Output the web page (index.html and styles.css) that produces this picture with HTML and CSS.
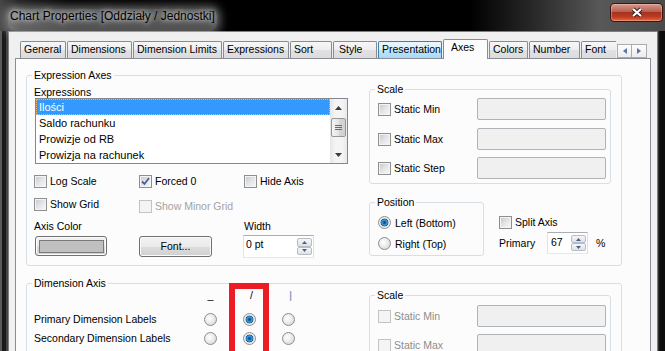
FILE: index.html
```html
<!DOCTYPE html>
<html lang="pl">
<head>
  <meta charset="UTF-8" />
  <meta name="viewport" content="width=device-width, initial-scale=1.0"/>
  <title>Chart Properties</title>
  <link rel="stylesheet" href="styles.css">
</head>
<body>
  <div class="window">
    <div class="titlebar">
      <span class="title">Chart Properties [Oddziały / Jednostki]</span>
      <span class="close-btn">
        <svg width="14" height="11" viewBox="0 0 14 11">
          <path d="M3 2 L11 9 M11 2 L3 9" stroke="#3c1c1c" stroke-width="4.2" fill="none"/>
          <path d="M3 2 L11 9 M11 2 L3 9" stroke="#ffffff" stroke-width="2.2" fill="none"/>
        </svg>
      </span>
    </div>

    <div class="client">
      <div class="tabstrip">
        <div class="tabs">
          <span class="tab tab-general">General</span>
          <span class="tab tab-dimensions">Dimensions</span>
          <span class="tab tab-limits">Dimension Limits</span>
          <span class="tab tab-expressions">Expressions</span>
          <span class="tab tab-sort">Sort</span>
          <span class="tab tab-style">Style</span>
          <span class="tab tab-presentation hover">Presentation</span>
          <span class="tab tab-axes active">Axes</span>
          <span class="tab tab-colors">Colors</span>
          <span class="tab tab-number">Number</span>
          <span class="tab tab-font">Font</span>
        </div>
        <div class="tab-scroll">
          <span class="tab-arrow"><svg width="4" height="6" viewBox="0 0 4 6"><path d="M4 0 L0 3 L4 6Z" fill="#5b74a4"/></svg></span>
          <span class="tab-arrow"><svg width="4" height="6" viewBox="0 0 4 6"><path d="M0 0 L4 3 L0 6Z" fill="#5b74a4"/></svg></span>
        </div>
      </div>

      <div class="panel">
        <div class="group axes-group">
          <span class="group-title">Expression Axes</span>
          <div class="axes-body">
            <div class="expr-col">
              <div class="field-label">Expressions</div>
              <div class="listbox">
                <div class="list-items">
                  <div class="list-item selected">Ilości</div>
                  <div class="list-item">Saldo rachunku</div>
                  <div class="list-item">Prowizje od RB</div>
                  <div class="list-item">Prowizja na rachunek</div>
                </div>
                <div class="vscroll">
                  <span class="vs-arrow"><svg width="7" height="4" viewBox="0 0 7 4"><path d="M0 4 L3.5 0 L7 4Z" fill="#3c3c3c"/></svg></span>
                  <div class="vs-track">
                    <span class="vs-thumb">
                      <svg width="7" height="6" viewBox="0 0 7 6"><path d="M0 0.5 H7 M0 2.5 H7 M0 4.5 H7" stroke="#6a6a6a" stroke-width="1"/></svg>
                    </span>
                  </div>
                  <span class="vs-arrow"><svg width="7" height="4" viewBox="0 0 7 4"><path d="M0 0 L3.5 4 L7 0Z" fill="#3c3c3c"/></svg></span>
                </div>
              </div>

              <div class="check-row row1">
                <label class="check"><span class="cb"></span>Log Scale</label>
                <label class="check">
                  <span class="cb checked"><svg width="11" height="11" viewBox="0 0 11 11"><path d="M2 5.5 L4.5 8 L9 2" fill="none" stroke="#4b5f92" stroke-width="1.8"/></svg></span>Forced 0
                </label>
                <label class="check"><span class="cb"></span>Hide Axis</label>
              </div>
              <div class="check-row row2">
                <label class="check"><span class="cb"></span>Show Grid</label>
                <label class="check minor disabled"><span class="cb"></span>Show Minor Grid</label>
              </div>

              <div class="label-row">
                <span class="axis-color-label">Axis Color</span>
                <span>Width</span>
              </div>
              <div class="control-row">
                <span class="btn color-btn"><span class="swatch"></span></span>
                <span class="btn font-btn">Font...</span>
                <span class="spin width-spin">
                  <span class="spin-val">0 pt</span>
                  <span class="spin-btns">
                    <span class="spin-btn"><svg width="5" height="3" viewBox="0 0 5 3"><path d="M0 3 L2.5 0 L5 3Z" fill="#4d6185"/></svg></span>
                    <span class="spin-btn"><svg width="5" height="3" viewBox="0 0 5 3"><path d="M0 0 L2.5 3 L5 0Z" fill="#4d6185"/></svg></span>
                  </span>
                </span>
              </div>
            </div>

            <div class="side-col">
              <div class="group scale-group">
                <span class="group-title">Scale</span>
                <div class="scale-row first">
                  <label class="check"><span class="cb"></span>Static Min</label>
                  <span class="textbox"></span>
                </div>
                <div class="scale-row">
                  <label class="check"><span class="cb"></span>Static Max</label>
                  <span class="textbox"></span>
                </div>
                <div class="scale-row third">
                  <label class="check"><span class="cb"></span>Static Step</label>
                  <span class="textbox"></span>
                </div>
              </div>

              <div class="pos-row">
                <div class="group pos-group">
                  <span class="group-title">Position</span>
                  <div class="radio-row"><span class="rb on"></span>Left (Bottom)</div>
                  <div class="radio-row"><span class="rb"></span>Right (Top)</div>
                </div>
                <div class="split-col">
                  <label class="check"><span class="cb"></span>Split Axis</label>
                  <div class="primary-row">
                    <span class="primary-label">Primary</span>
                    <span class="spin primary-spin">
                      <span class="spin-val">67</span>
                      <span class="spin-btns">
                        <span class="spin-btn"><svg width="5" height="3" viewBox="0 0 5 3"><path d="M0 3 L2.5 0 L5 3Z" fill="#4d6185"/></svg></span>
                        <span class="spin-btn"><svg width="5" height="3" viewBox="0 0 5 3"><path d="M0 0 L2.5 3 L5 0Z" fill="#4d6185"/></svg></span>
                      </span>
                    </span>
                    <span class="pct">%</span>
                  </div>
                </div>
              </div>
            </div>
          </div>
        </div>

        <div class="group dim-group">
          <span class="group-title">Dimension Axis</span>
          <div class="dim-body">
            <div class="dim-col">
              <div class="dim-head">
                <span class="dim-label"></span>
                <span class="cells">
                  <span class="cell">_</span>
                  <span class="cell slash">/</span>
                  <span class="cell vbar">|</span>
                </span>
              </div>
              <div class="dim-row first">
                <span class="dim-label">Primary Dimension Labels</span>
                <span class="cells"><span class="rb"></span><span class="rb on"></span><span class="rb"></span></span>
              </div>
              <div class="dim-row">
                <span class="dim-label">Secondary Dimension Labels</span>
                <span class="cells"><span class="rb"></span><span class="rb on"></span><span class="rb"></span></span>
              </div>
            </div>

            <div class="group scale-group dim-scale">
              <span class="group-title">Scale</span>
              <div class="scale-row first">
                <label class="check disabled"><span class="cb"></span>Static Min</label>
                <span class="textbox"></span>
              </div>
              <div class="scale-row">
                <label class="check disabled"><span class="cb"></span>Static Max</label>
                <span class="textbox"></span>
              </div>
            </div>
          </div>
        </div>
      </div>
    </div>

    <div class="annotation"></div>
  </div>
</body>
</html>
```

FILE: styles.css
```css
body {
  margin: 0;
  background: #111;
  font-family: "Liberation Sans", Arial, sans-serif;
  font-size: 10.5px;
  color: #000;
}

.window {
  position: relative;
  width: 665px;
  height: 351px;
  overflow: hidden;
  background: linear-gradient(90deg, #5a5a5a 0, #5a5a5a 2px, #1a1a1a 2px, #1a1a1a 6px, #444 6px, #444 8px, #151515 8px, #151515 658px, #3a3a3a 658px, #0c0c0c 660px);
}

/* title bar */

.titlebar {
  display: flex;
  height: 31px;
  background: linear-gradient(90deg, #474747 0, #1c1c1c 20px, #000 70px, #000 470px, #262626 530px, #585858 600px, #4a4a4a 665px);
}

.title {
  margin: 9px 0 0 8px;
  padding: 0 2px;
  font-size: 12px;
  line-height: 14px;
  color: #000;
  border-radius: 7px;
  background: rgba(235, 235, 235, 0.35);
  box-shadow: 0 0 8px 4px rgba(235, 235, 235, 0.35);
  text-shadow: 0 0 5px rgba(255, 255, 255, 0.9), 0 0 9px rgba(255, 255, 255, 0.7);
}

.close-btn {
  display: flex;
  align-items: center;
  justify-content: center;
  margin: 3px 2px 0 auto;
  width: 53px;
  height: 19px;
  box-sizing: border-box;
  border: 1px solid #3a1612;
  border-radius: 4px;
  background: linear-gradient(#d49a8e 0, #b95f50 45%, #a33420 50%, #c03a20 75%, #e26a44 100%);
  box-shadow: inset 0 0 0 1px rgba(255, 220, 200, 0.35);
}

/* client area */

.client {
  box-sizing: border-box;
  width: 650px;
  height: 320px;
  margin-left: 8px;
  padding: 7px 6px 0 6px;
  border: 1px solid #7f7f7f;
  border-bottom: none;
  background: #f0f0f0;
}

.tabstrip {
  position: relative;
  z-index: 1;
  display: flex;
  height: 20px;
  margin-bottom: -1px;
  padding-left: 5px;
}

.tabs {
  display: flex;
  align-items: flex-end;
  gap: 1px;
  width: 596px;
  overflow: hidden;
  flex: none;
}

.tab {
  flex: none;
  box-sizing: border-box;
  height: 17px;
  margin-bottom: 1px;
  padding-left: 3px;
  border: 1px solid #898c95;
  border-bottom: none;
  border-radius: 2px 2px 0 0;
  background: linear-gradient(#f7f7f7, #ededed 50%, #e1e1e1 51%, #dcdcdc);
  line-height: 15px;
  white-space: nowrap;
}

.tab.hover {
  border-color: #3c7fb1;
  background: linear-gradient(#eaf6fd, #d9f0fc 50%, #bee6fd 51%, #a7d9f5);
}

.tab.active {
  height: 20px;
  margin-bottom: 0;
  padding-left: 7px;
  background: #fcfcfc;
  line-height: 15px;
}

.tab-general { width: 46px; }
.tab-dimensions { width: 65px; }
.tab-limits { width: 89px; }
.tab-expressions { width: 66px; }
.tab-sort { width: 42px; }
.tab-style { width: 44px; padding-left: 5px; }
.tab-presentation { width: 64px; }
.tab-axes { width: 45px; }
.tab-colors { width: 39px; }
.tab-number { width: 51px; }
.tab-font { width: 40px; }

.tab-scroll {
  display: flex;
  align-self: flex-end;
  margin: 0 0 1px 1px;
}

.tab-arrow {
  display: flex;
  align-items: center;
  justify-content: center;
  width: 15px;
  height: 14px;
  box-sizing: border-box;
  border: 1px solid #acacac;
  background: linear-gradient(#fdfdfd, #ececec);
}

.tab-arrow + .tab-arrow {
  border-left: none;
}

.panel {
  box-sizing: border-box;
  height: 294px;
  padding: 16px 28px 0 10px;
  border: 1px solid #898c95;
  border-bottom: none;
  background: #fcfcfc;
  overflow: hidden;
}

/* group boxes */

.group {
  border: 1px solid #d5dfe5;
  border-radius: 3px;
}

.group-title {
  display: block;
  width: fit-content;
  margin: -7px 0 0 5px;
  padding: 0 2px;
  line-height: 12px;
  background: #fcfcfc;
}

.axes-body {
  display: flex;
  align-items: flex-start;
  gap: 21px;
  padding: 0 9px 7px 7px;
}

.expr-col {
  width: 314px;
  flex: none;
}

.field-label {
  margin-top: 5px;
  line-height: 12px;
}

.listbox {
  display: flex;
  box-sizing: border-box;
  width: 313px;
  height: 66px;
  margin-left: 1px;
  border: 1px solid #828790;
  background: #fff;
}

.list-items {
  flex: 1;
}

.list-item {
  height: 16px;
  padding-left: 3px;
  line-height: 16px;
  font-size: 11px;
}

.list-item.selected {
  box-sizing: border-box;
  padding-left: 2px;
  border: 1px dotted #f2b56e;
  background: #3399ff;
  color: #fff;
  line-height: 14px;
}

.vscroll {
  display: flex;
  flex-direction: column;
  width: 17px;
  background: linear-gradient(90deg, #e6e6e6, #f4f4f4 30%, #f4f4f4 70%, #e9e9e9);
}

.vs-arrow {
  display: flex;
  align-items: center;
  justify-content: center;
  height: 17px;
}

.vs-track {
  flex: 1;
  padding: 2px 1px 0 1px;
}

.vs-thumb {
  display: flex;
  align-items: center;
  justify-content: center;
  box-sizing: border-box;
  height: 19px;
  border: 1px solid #979797;
  border-radius: 2px;
  background: linear-gradient(90deg, #f3f3f3, #e4e4e4 50%, #d6d6d6 51%, #d0d0d0);
}

/* checkboxes and radios */

.check {
  display: flex;
  align-items: center;
  gap: 3px;
  flex: none;
  width: 105px;
  height: 13px;
  line-height: 13px;
  white-space: nowrap;
}

.cb {
  display: flex;
  flex: none;
  box-sizing: border-box;
  width: 13px;
  height: 13px;
  border: 1px solid #8e8f8f;
  background: linear-gradient(135deg, #c2c6cc 0, #e3e5e8 50%, #f8f8f8 100%);
  box-shadow: inset 0 0 0 1px #f4f4f4;
}

.check.disabled {
  color: #8d8d8d;
}

.check.disabled .cb {
  border-color: #c3c3c3;
  background: #f4f4f4;
  box-shadow: none;
}

.check.minor {
  margin-top: 2px;
  color: #a3a3a3;
}

.rb {
  display: block;
  flex: none;
  box-sizing: border-box;
  width: 13px;
  height: 13px;
  border: 1px solid #8d8d8d;
  border-radius: 50%;
  background: radial-gradient(circle at 40% 40%, #ffffff 0, #eeeeee 40%, #cfcfcf 100%);
}

.rb.on {
  background: radial-gradient(circle at 50% 50%, #0b3f6b 0, #1d6fb3 1.5px, #3aa7ea 2.6px, #1a5f9a 3.6px, #dedede 4.2px, #f6f6f6 5.5px);
}

.check-row {
  display: flex;
  align-items: flex-start;
}

.check-row.row1 { margin-top: 11px; }
.check-row.row2 { margin-top: 10px; }

.label-row {
  display: flex;
  margin-top: 7px;
  line-height: 12px;
}

.axis-color-label {
  width: 210px;
}

.control-row {
  display: flex;
  align-items: flex-start;
  margin-top: 3px;
}

.btn {
  box-sizing: border-box;
  border: 1px solid #707070;
  border-radius: 3px;
  background: linear-gradient(#f2f2f2, #ebebeb 50%, #dddddd 51%, #cfcfcf);
  box-shadow: inset 0 0 0 1px #fbfbfb;
}

.color-btn {
  display: flex;
  width: 72px;
  height: 20px;
  margin: 1px 0 0 1px;
  padding: 3px 2px 2px 3px;
}

.swatch {
  flex: 1;
  border: 1px solid #7a7a7a;
  background: #c0c0c0;
}

.font-btn {
  width: 73px;
  height: 21px;
  margin: 1px 0 0 32px;
  line-height: 19px;
  text-align: center;
}

.spin {
  display: flex;
  flex: none;
  box-sizing: border-box;
  border: 1px solid;
  border-color: #abadb3 #dbdfe6 #e3e9ef #e2e3ea;
  background: #fff;
}

.spin-val {
  flex: 1;
  padding: 2px 0 0 2px;
  line-height: 12px;
}

.spin-btns {
  display: flex;
  flex-direction: column;
  width: 15px;
  margin: 2px 1px 2px 0;
}

.spin-btn {
  display: flex;
  flex: 1;
  align-items: center;
  justify-content: center;
  border: 1px solid #b7bdc6;
  border-radius: 2px;
  background: linear-gradient(#f6f6f6, #dde2e8);
}

.width-spin {
  width: 71px;
  height: 23px;
  margin-left: 31px;
}

/* right side of expression axes */

.side-col {
  width: 242px;
  flex: none;
}

.scale-group {
  margin-top: 8px;
  padding-bottom: 4px;
}

.scale-row {
  display: flex;
  align-items: center;
  height: 22px;
  margin-top: 8px;
  padding: 0 4px 0 8px;
}

.scale-row .check {
  width: auto;
}

.scale-row.first { margin-top: 3px; }
.scale-row.third { margin-top: 7px; }

.textbox {
  flex: none;
  box-sizing: border-box;
  width: 129px;
  height: 22px;
  margin-left: auto;
  border: 1px solid #afb3b7;
  border-radius: 2px;
  background: #f0f0f0;
}

.pos-row {
  display: flex;
  align-items: flex-start;
  margin-top: 18px;
}

.pos-group {
  flex: none;
  box-sizing: border-box;
  width: 115px;
  padding-bottom: 5px;
}

.radio-row {
  display: flex;
  align-items: center;
  gap: 4px;
  height: 13px;
  margin-top: 8px;
  padding-left: 8px;
  white-space: nowrap;
}

.split-col {
  margin-left: 15px;
  padding-top: 14px;
}

.primary-row {
  display: flex;
  align-items: center;
  height: 22px;
  margin-top: 3px;
}

.primary-label {
  width: 48px;
  flex: none;
}

.primary-spin {
  width: 41px;
  height: 22px;
}

.primary-spin .spin-val {
  padding: 3px 0 0 3px;
}

.pct {
  margin-left: 8px;
}

/* dimension axis */

.dim-group {
  margin-top: 17px;
  height: 80px;
}

.dim-body {
  display: flex;
  align-items: flex-start;
  gap: 21px;
  padding-left: 7px;
}

.dim-col {
  width: 314px;
  flex: none;
}

.dim-head {
  display: flex;
  height: 12px;
  line-height: 12px;
}

.dim-label {
  width: 170px;
  flex: none;
  white-space: nowrap;
}

.cells {
  display: flex;
  gap: 26px;
}

.cell {
  width: 13px;
  text-align: center;
}

.cell.slash {
  padding-left: 2px;
}

.cell.vbar {
  color: #5b7bb0;
}

.dim-row {
  display: flex;
  align-items: center;
  height: 16px;
  margin-top: 3px;
}

.dim-row.first {
  margin-top: 10px;
}

.dim-scale {
  width: 242px;
  flex: none;
  box-sizing: border-box;
  margin-top: 6px;
  height: 80px;
}

.dim-scale .scale-row.first {
  margin-top: 4px;
}

.dim-scale .scale-row {
  margin-top: 7px;
}

/* red marker drawn over the dialog */

.annotation {
  position: absolute;
  left: 229px;
  top: 283px;
  width: 28px;
  height: 80px;
  border: 6px solid #ed1c24;
}
```
